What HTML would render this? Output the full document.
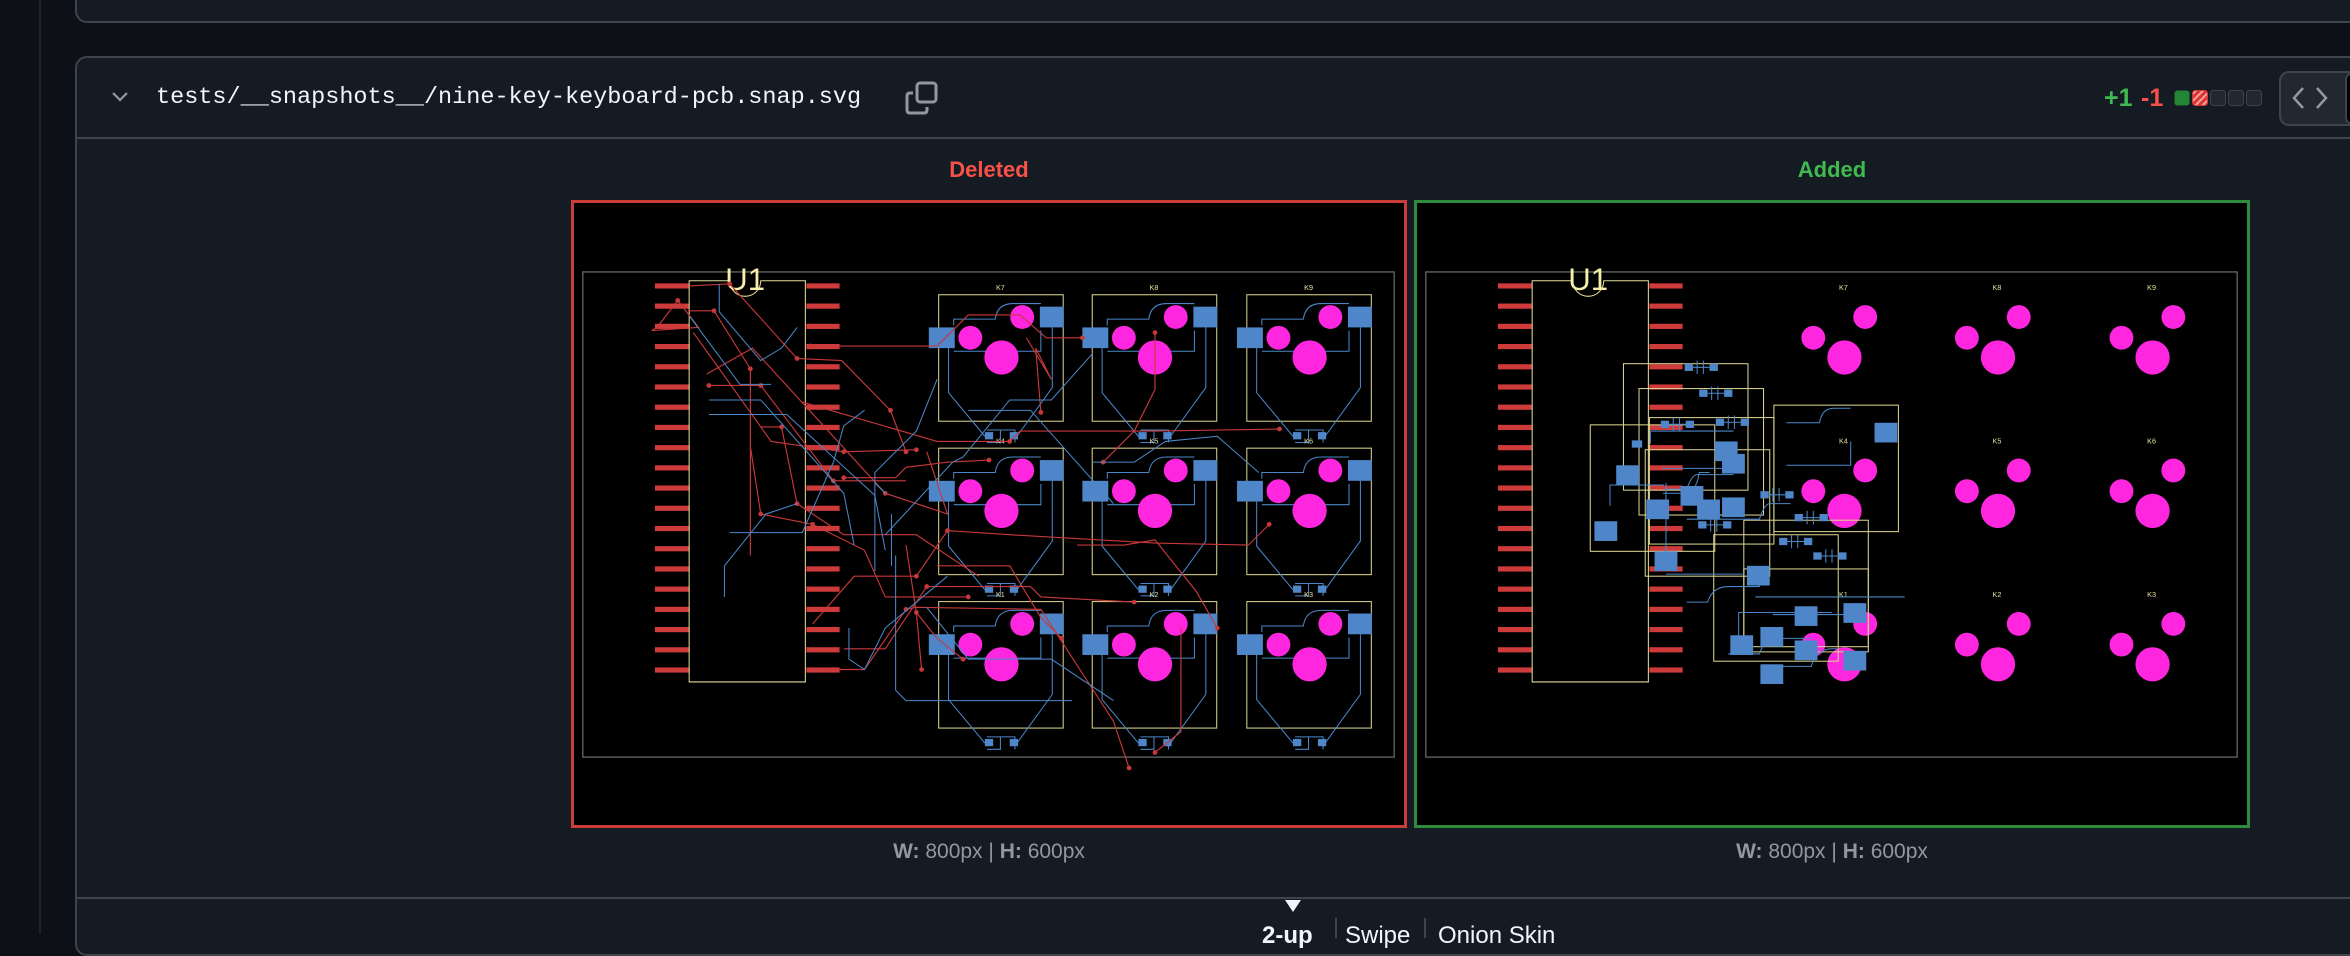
<!DOCTYPE html>
<html><head><meta charset="utf-8"><style>
*{margin:0;padding:0;box-sizing:border-box}
html,body{width:2350px;height:934px;overflow:hidden;background:#0d1117;font-family:"Liberation Sans",sans-serif}
.gut{position:absolute;left:39px;top:0;width:2px;height:934px;background:#1f242b}
.card1{position:absolute;left:75px;top:-20px;width:2300px;height:43px;background:#151b23;border:2px solid #3d444d;border-radius:12px}
.card2{position:absolute;left:75px;top:56px;width:2300px;height:900px;background:#151b23;border:2px solid #3d444d;border-radius:12px}
.hdr{position:absolute;left:75px;top:137px;width:2275px;height:2px;background:#3d444d}
.bot{position:absolute;left:75px;top:897px;width:2275px;height:2px;background:#3d444d}
.fn{position:absolute;left:156px;top:84px;font-family:"Liberation Mono",monospace;font-size:23.5px;color:#f0f6fc;white-space:nowrap}
.lab{position:absolute;font-weight:bold;font-size:22px;text-align:center}
.box{position:absolute;top:200px;width:836px;height:628px;background:#000;border:3px solid}
.box svg{position:absolute;left:0;top:0;width:830px;height:622px}
.cap{position:absolute;top:840px;font-size:21px;color:#9198a1;width:836px;text-align:center}
.cap b{color:#9198a1}
</style></head><body>
<div class="gut"></div>
<div class="card1"></div>
<div class="card2"></div>
<div class="hdr"></div>
<div class="bot"></div>
<svg style="position:absolute;left:110px;top:90px" width="20" height="14" viewBox="0 0 20 14"><path d="M3 3 L10 10 L17 3" fill="none" stroke="#9198a1" stroke-width="2.2"/></svg>
<div class="fn">tests/__snapshots__/nine-key-keyboard-pcb.snap.svg</div>
<svg style="position:absolute;left:905px;top:81px" width="34" height="34" viewBox="0 0 34 34" fill="none" stroke="#9198a1" stroke-width="3"><rect x="12" y="2" width="19" height="19" rx="3"/><path d="M8 12 H5 Q2 12 2 15 V29 Q2 32 5 32 H19 Q22 32 22 29 V26"/></svg>
<div style="position:absolute;left:2104px;top:84px;font-size:25px;font-weight:bold;color:#3fb950">+1</div>
<div style="position:absolute;left:2141px;top:84px;font-size:25px;font-weight:bold;color:#f85149">-1</div>
<svg style="position:absolute;left:2174px;top:90px" width="90" height="17" viewBox="0 0 90 17">
<defs><pattern id="st" width="5" height="5" patternUnits="userSpaceOnUse" patternTransform="rotate(45)"><rect width="5" height="5" fill="#da3633"/><rect width="2" height="5" fill="#f4a3a0"/></pattern></defs>
<rect x="0.5" y="0.5" width="15" height="15" rx="3" fill="#238636"/>
<rect x="18.5" y="0.5" width="15" height="15" rx="3" fill="url(#st)" stroke="#da3633"/>
<rect x="36.5" y="0.5" width="15" height="15" rx="3" fill="#212830" stroke="#3d444d"/>
<rect x="54.5" y="0.5" width="15" height="15" rx="3" fill="#212830" stroke="#3d444d"/>
<rect x="72.5" y="0.5" width="15" height="15" rx="3" fill="#212830" stroke="#3d444d"/>
</svg>
<div style="position:absolute;left:2279px;top:71px;width:80px;height:55px;background:#212830;border:2px solid #3d444d;border-radius:10px"></div>
<svg style="position:absolute;left:2292px;top:85px" width="36" height="26" viewBox="0 0 36 26" fill="none" stroke="#9198a1" stroke-width="2.5"><path d="M11 3 L2 13 L11 23 M25 3 L34 13 L25 23"/></svg>
<div style="position:absolute;left:2345px;top:72px;width:20px;height:53px;background:#000;border:2px solid #3d444d;border-radius:8px"></div>

<div class="lab" style="left:571px;width:836px;top:157px;color:#f85149">Deleted</div>
<div class="lab" style="left:1414px;width:836px;top:157px;color:#3fb950">Added</div>

<svg width="0" height="0" style="position:absolute">
<defs>
<g id="pads" fill="#cf3a3a">
<rect x="78" y="77.5" width="33" height="5"/><rect x="78" y="97" width="33" height="5"/><rect x="78" y="116.5" width="33" height="5"/><rect x="78" y="136" width="33" height="5"/><rect x="78" y="155.5" width="33" height="5"/><rect x="78" y="175" width="33" height="5"/><rect x="78" y="194.5" width="33" height="5"/><rect x="78" y="214" width="33" height="5"/><rect x="78" y="233.5" width="33" height="5"/><rect x="78" y="253" width="33" height="5"/><rect x="78" y="272.5" width="33" height="5"/><rect x="78" y="292" width="33" height="5"/><rect x="78" y="311.5" width="33" height="5"/><rect x="78" y="331" width="33" height="5"/><rect x="78" y="350.5" width="33" height="5"/><rect x="78" y="370" width="33" height="5"/><rect x="78" y="389.5" width="33" height="5"/><rect x="78" y="409" width="33" height="5"/><rect x="78" y="428.5" width="33" height="5"/><rect x="78" y="448" width="33" height="5"/>
<rect x="224" y="77.5" width="32" height="5"/><rect x="224" y="97" width="32" height="5"/><rect x="224" y="116.5" width="32" height="5"/><rect x="224" y="136" width="32" height="5"/><rect x="224" y="155.5" width="32" height="5"/><rect x="224" y="175" width="32" height="5"/><rect x="224" y="194.5" width="32" height="5"/><rect x="224" y="214" width="32" height="5"/><rect x="224" y="233.5" width="32" height="5"/><rect x="224" y="253" width="32" height="5"/><rect x="224" y="272.5" width="32" height="5"/><rect x="224" y="292" width="32" height="5"/><rect x="224" y="311.5" width="32" height="5"/><rect x="224" y="331" width="32" height="5"/><rect x="224" y="350.5" width="32" height="5"/><rect x="224" y="370" width="32" height="5"/><rect x="224" y="389.5" width="32" height="5"/><rect x="224" y="409" width="32" height="5"/><rect x="224" y="428.5" width="32" height="5"/><rect x="224" y="448" width="32" height="5"/>
</g>
<g id="u1">
<rect x="8.5" y="66.5" width="782" height="468" fill="none" stroke="#6b6b6b" stroke-width="1.2"/>
<use href="#pads"/>
<path d="M111 75 H150 A15 15 0 0 0 180 75 H223 V462 H111 Z" fill="none" stroke="#e4dc98" stroke-width="1"/>
<text x="165" y="84" font-family="Liberation Sans,sans-serif" font-size="30" fill="#f4eea8" text-anchor="middle">U1</text>
</g>
<g id="circ" fill="#ff26e0">
<circle cx="81" cy="22" r="11.5"/><circle cx="31" cy="42" r="11.5"/><circle cx="61" cy="61" r="16.5"/>
</g>
<g id="key">
<rect x="0.5" y="0.5" width="120" height="122" fill="none" stroke="#d9d38e" stroke-width="1"/>
<g fill="none" stroke="#4b87c8" stroke-width="1">
<path d="M15 30 V24 H55 Q57 9 72 9 H99"/><path d="M15 55 H99 V35"/><path d="M110 32 V90 L76 137"/><path d="M45 137 L10 95 V52"/>
<path d="M47 131 H60 V143 H47 M60 131 H74 V143"/></g>
<use href="#circ"/>
<g fill="#4e86c9"><rect x="98" y="12" width="23" height="20"/><rect x="-9" y="32" width="25" height="20"/><rect x="45" y="133" width="8" height="7"/><rect x="69" y="133" width="8" height="7"/></g>
</g>
<g id="dio" fill="#4e86c9"><rect x="0" y="0" width="8" height="7"/><rect x="24" y="0" width="8" height="7"/><path d="M8 3.5 H24 M12 -3 V10 M18 -3 V10" stroke="#4b87c8" fill="none" stroke-width="1"/></g>
</defs></svg>

<div class="box" style="left:571px;border-color:#c93c37">
<svg viewBox="0 0 800 600" preserveAspectRatio="none">
<use href="#u1"/>
<use href="#key" x="351" y="88"/><use href="#key" x="499" y="88"/><use href="#key" x="648" y="88"/>
<use href="#key" x="351" y="236"/><use href="#key" x="499" y="236"/><use href="#key" x="648" y="236"/>
<use href="#key" x="351" y="384"/><use href="#key" x="499" y="384"/><use href="#key" x="648" y="384"/>
<g font-family="Liberation Sans,sans-serif" font-size="7" fill="#e6e09a" text-anchor="middle">
<text x="411" y="84">K7</text><text x="559" y="84">K8</text><text x="708" y="84">K9</text>
<text x="411" y="232">K4</text><text x="559" y="232">K5</text><text x="708" y="232">K6</text>
<text x="411" y="380">K1</text><text x="559" y="380">K2</text><text x="708" y="380">K3</text></g>
<g fill="none" stroke="#c8383b" stroke-width="1.1">
<path d="M111 80 L150 78 L215 150 L258 152 L305 200 L320 240"/>
<path d="M80 120 L100 94 L120 120 L75 123 Z"/>
<path d="M110 104 L135 104 L170 160 L170 340"/>
<path d="M115 125 L190 230 L260 240 L330 238"/>
<path d="M128 165 L172 140 L300 280 L360 300 L340 240"/>
<path d="M228 138 L350 138 L380 108 L430 108 L455 130 L490 130"/>
<path d="M130 176 L180 176 L250 268 L320 268"/>
<path d="M220 192 L350 230 L420 230 L430 220 L560 220 L680 218"/>
<path d="M180 216 L200 216 L215 290 L260 320 L330 320 L390 360"/>
<path d="M170 235 L180 300 L230 310 L280 335 L300 380 L380 380"/>
<path d="M260 265 L310 265 L320 255 L360 250 L400 248"/>
<path d="M230 406 L270 360 L330 360 L360 316 L420 320 L560 328 L650 330 L670 310"/>
<path d="M240 450 L280 450 L320 392 L330 390 L450 392 L520 500 L535 545"/>
<path d="M260 430 L300 430 L340 370 L440 370 L450 380 L540 385"/>
<path d="M320 330 L330 395 L350 420 L375 440"/>
<path d="M350 350 L420 350 L450 400 L470 420"/>
<path d="M485 330 L530 330 L560 325 L600 375 L620 410"/>
<path d="M585 410 L585 510 L560 530"/>
<path d="M560 125 L560 180 L540 220 L510 250"/>
<path d="M450 202 L445 140 L460 170 L436 130"/>
<path d="M330 395 L335 450"/>
</g>
<g fill="#c8383b">
<circle cx="150" cy="78" r="2.3"/><circle cx="100" cy="94" r="2.3"/><circle cx="135" cy="104" r="2.3"/><circle cx="170" cy="160" r="2.3"/><circle cx="130" cy="176" r="2.3"/><circle cx="215" cy="150" r="2.3"/><circle cx="305" cy="200" r="2.3"/><circle cx="320" cy="240" r="2.3"/><circle cx="228" cy="138" r="2.3"/><circle cx="490" cy="130" r="2.3"/><circle cx="180" cy="176" r="2.3"/><circle cx="250" cy="268" r="2.3"/><circle cx="260" cy="240" r="2.3"/><circle cx="330" cy="238" r="2.3"/><circle cx="680" cy="218" r="2.3"/><circle cx="200" cy="216" r="2.3"/><circle cx="215" cy="290" r="2.3"/><circle cx="180" cy="300" r="2.3"/><circle cx="230" cy="310" r="2.3"/><circle cx="380" cy="380" r="2.3"/><circle cx="260" cy="265" r="2.3"/><circle cx="400" cy="248" r="2.3"/><circle cx="670" cy="310" r="2.3"/><circle cx="330" cy="360" r="2.3"/><circle cx="360" cy="316" r="2.3"/><circle cx="535" cy="545" r="2.3"/><circle cx="320" cy="392" r="2.3"/><circle cx="340" cy="370" r="2.3"/><circle cx="540" cy="385" r="2.3"/><circle cx="375" cy="440" r="2.3"/><circle cx="470" cy="420" r="2.3"/><circle cx="620" cy="410" r="2.3"/><circle cx="560" cy="530" r="2.3"/><circle cx="560" cy="125" r="2.3"/><circle cx="510" cy="250" r="2.3"/><circle cx="450" cy="202" r="2.3"/><circle cx="335" cy="450" r="2.3"/><circle cx="330" cy="395" r="2.3"/><circle cx="300" cy="280" r="2.3"/><circle cx="420" cy="230" r="2.3"/>
</g>
<g fill="none" stroke="#4b87c8" stroke-width="1">
<path d="M140 78 L140 105 L180 152 L200 140 L215 120"/>
<path d="M112 110 L160 175 L190 175"/>
<path d="M130 190 L180 190 L260 280 L270 330"/>
<path d="M130 204 L205 204 L290 282 L300 335"/>
<path d="M150 318 L220 318 L250 250 L260 215 L280 200"/>
<path d="M145 380 L145 350 L185 300 L215 290"/>
<path d="M290 355 L290 260 L330 220 L350 170"/>
<path d="M300 320 L365 250 L375 245 L420 190 L460 190 L500 145"/>
<path d="M310 340 L310 470 L320 480 L480 480"/>
<path d="M265 410 L265 440 L280 450 L300 410 L360 360"/>
<path d="M380 200 L440 200 L520 290"/>
<path d="M340 390 L380 440 L460 440 L520 480"/>
<path d="M500 250 L540 250 L570 230 L620 225 L660 260"/>
<path d="M290 270 L300 280 M306 300 L306 350"/>
</g>
</svg></div>

<div class="box" style="left:1414px;border-color:#2e8b3e">
<svg viewBox="0 0 800 600" preserveAspectRatio="none">
<use href="#u1"/>
<use href="#circ" x="351" y="88"/><use href="#circ" x="499" y="88"/><use href="#circ" x="648" y="88"/>
<use href="#circ" x="351" y="236"/><use href="#circ" x="499" y="236"/><use href="#circ" x="648" y="236"/>
<use href="#circ" x="351" y="384"/><use href="#circ" x="499" y="384"/><use href="#circ" x="648" y="384"/>
<g font-family="Liberation Sans,sans-serif" font-size="7" fill="#e6e09a" text-anchor="middle">
<text x="411" y="84">K7</text><text x="559" y="84">K8</text><text x="708" y="84">K9</text>
<text x="411" y="232">K4</text><text x="559" y="232">K5</text><text x="708" y="232">K6</text>
<text x="411" y="380">K1</text><text x="559" y="380">K2</text><text x="708" y="380">K3</text></g>
<g fill="none" stroke="#d9d38e" stroke-width="1">
<rect x="199" y="155" width="120" height="122"/><rect x="214" y="179" width="120" height="122"/>
<rect x="167" y="214" width="120" height="122"/><rect x="224" y="207" width="120" height="122"/>
<rect x="344" y="195" width="120" height="122"/><rect x="315" y="306" width="120" height="122"/>
<rect x="286" y="320" width="120" height="122"/><rect x="220" y="238" width="120" height="122"/>
<rect x="315" y="353" width="120" height="80"/>
</g>
<g fill="none" stroke="#4b87c8" stroke-width="1">
<path d="M356 212 H388 Q390 198 402 198 H418"/><path d="M356 253 H418 V230"/>
<path d="M225 232 V220 H305"/><path d="M236 256 H305 V242"/><path d="M240 276 H260 Q265 262 270 262 H305"/>
<path d="M186 292 V272 H238"/><path d="M237 280 H262 Q270 275 272 260 H282"/>
<path d="M260 305 H330 Q335 290 340 290 H360"/><path d="M240 358 H315"/>
<path d="M240 270 L240 345"/><path d="M260 385 H280 Q285 370 300 370 H330 V360"/>
<path d="M326 380 H470"/><path d="M310 428 V395 H400"/><path d="M300 435 H330 Q335 420 345 420 H380"/>
<path d="M343 397 H420"/><path d="M340 447 H380 Q385 430 400 430 H405"/>
</g>
<g fill="#4e86c9">
<rect x="287" y="230" width="22" height="19"/><rect x="192" y="253" width="22" height="19"/>
<rect x="294" y="242" width="22" height="19"/><rect x="221" y="286" width="22" height="19"/>
<rect x="270" y="286" width="22" height="19"/><rect x="171" y="307" width="22" height="19"/>
<rect x="254" y="273" width="22" height="19"/><rect x="294" y="284" width="22" height="19"/>
<rect x="441" y="212" width="22" height="19"/><rect x="318" y="350" width="22" height="19"/>
<rect x="229" y="336" width="22" height="19"/><rect x="411" y="386" width="22" height="19"/>
<rect x="364" y="389" width="22" height="19"/><rect x="411" y="432" width="22" height="19"/>
<rect x="331" y="409" width="22" height="19"/><rect x="364" y="422" width="22" height="19"/>
<rect x="302" y="417" width="22" height="19"/><rect x="331" y="445" width="22" height="19"/>
<rect x="207" y="229" width="10" height="7"/>
</g>
<use href="#dio" x="258" y="155"/><use href="#dio" x="272" y="180"/><use href="#dio" x="288" y="208"/>
<use href="#dio" x="271" y="307"/><use href="#dio" x="235" y="210"/><use href="#dio" x="382" y="337"/>
<use href="#dio" x="331" y="278"/><use href="#dio" x="364" y="300"/><use href="#dio" x="349" y="323"/>
</svg></div>

<div class="cap" style="left:571px"><b>W:</b> 800px | <b>H:</b> 600px</div>
<div class="cap" style="left:1414px"><b>W:</b> 800px | <b>H:</b> 600px</div>

<svg style="position:absolute;left:1284px;top:899px" width="18" height="14" viewBox="0 0 18 14"><path d="M1 1 H17 L9 13 Z" fill="#f0f6fc"/></svg>
<div style="position:absolute;top:922px;left:1262px;font-size:24px;color:#f0f6fc;white-space:nowrap"><b>2-up</b></div>
<div style="position:absolute;top:918px;left:1335px;width:2px;height:20px;background:#3d444d"></div>
<div style="position:absolute;top:922px;left:1345px;font-size:24px;color:#f0f6fc">Swipe</div>
<div style="position:absolute;top:918px;left:1424px;width:2px;height:20px;background:#3d444d"></div>
<div style="position:absolute;top:922px;left:1438px;font-size:24px;color:#f0f6fc">Onion Skin</div>
</body></html>
